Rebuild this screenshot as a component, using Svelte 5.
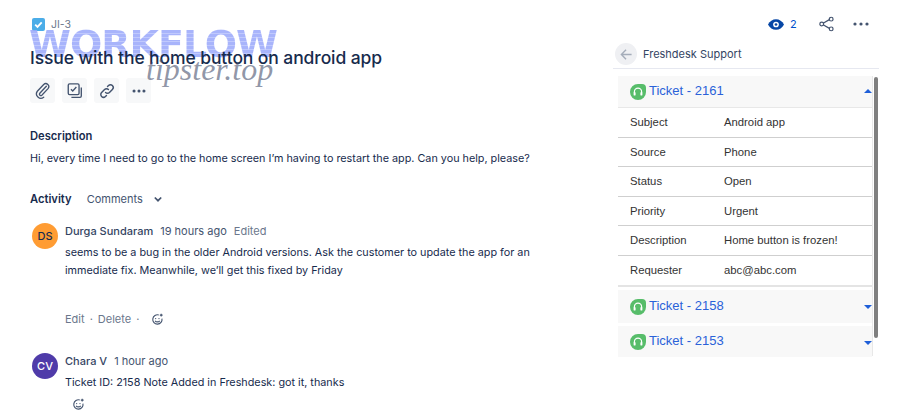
<script>
  const tickets = [
    { id: 2161, open: true },
    { id: 2158, open: false },
    { id: 2153, open: false }
  ];
  const details = [
    ['Subject', 'Android app'],
    ['Source', 'Phone'],
    ['Status', 'Open'],
    ['Priority', 'Urgent'],
    ['Description', 'Home button is frozen!'],
    ['Requester', 'abc@abc.com']
  ];
</script>

{#snippet smile()}
  <svg class="smile" width="13" height="13" viewBox="0 0 14 14" fill="none" stroke="#44546f" stroke-width="1.2">
    <path d="M11.8 6a5 5 0 1 1-3.4-3.8" />
    <circle cx="5" cy="6" r=".7" fill="#44546f" stroke="none" />
    <circle cx="8.6" cy="6" r=".7" fill="#44546f" stroke="none" />
    <path d="M4.4 8.4c1.2 1.6 3.8 1.6 5 0" />
    <path d="M11 .8v3M9.5 2.3h3" />
  </svg>
{/snippet}

{#snippet headset()}
  <svg class="headset" width="16" height="16" viewBox="0 0 16 16">
    <path d="M8 0h4a4 4 0 0 1 4 4v4a8 8 0 1 1-8-8z" fill="#57bd6a" />
    <path d="M4.4 9V7.8a3.6 3.6 0 0 1 7.2 0V9" fill="none" stroke="#fff" stroke-width="1.2" />
    <rect x="3.6" y="8" width="2" height="3.6" rx=".9" fill="#fff" />
    <rect x="10.4" y="8" width="2" height="3.6" rx=".9" fill="#fff" />
  </svg>
{/snippet}

<div class="page">
  <main class="issue">
    <div class="crumb">
      <svg width="13" height="13" viewBox="0 0 13 13">
        <rect width="13" height="13" rx="2" fill="#4bade8" />
        <path d="M3.2 6.6l2.3 2.3 4.2-4.6" fill="none" stroke="#fff" stroke-width="1.8" />
      </svg>
      <span>JI-3</span>
    </div>
    <div class="watermark">WORKFLOW</div>
    <h1>Issue with the home button on android app</h1>
    <div class="watermark2">tipster.top</div>

    <div class="tools">
      <button aria-label="Attach">
        <svg width="18" height="18" viewBox="0 0 20 20" fill="none" stroke="#44546f" stroke-width="1.5" stroke-linecap="round">
          <path d="M14.6 5.6l-7.4 8a1.6 1.6 0 0 0 2.3 2.2l7-7.5a3.4 3.4 0 0 0-4.9-4.7l-7.2 7.7a5 5 0 0 0 7.2 6.8" transform="translate(-.6 -.8) scale(.98)" />
        </svg>
      </button>
      <button aria-label="Subtask">
        <svg width="18" height="18" viewBox="0 0 20 20" fill="none" stroke="#44546f" stroke-width="1.5">
          <rect x="2.5" y="2" width="12" height="12" rx="1.5" />
          <path d="M5.5 8l2 2 4-4.4" />
          <path d="M17 6v9.5a1.5 1.5 0 0 1-1.5 1.5H6" />
        </svg>
      </button>
      <button aria-label="Link">
        <svg width="18" height="18" viewBox="0 0 20 20" fill="none" stroke="#44546f" stroke-width="1.6" stroke-linecap="round">
          <path d="M8.4 11.6a3 3 0 0 0 4.3 0l3.3-3.4a3 3 0 0 0-4.3-4.3l-1.1 1.1" />
          <path d="M11.6 8.4a3 3 0 0 0-4.3 0L4 11.8a3 3 0 0 0 4.3 4.3l1.1-1.1" />
        </svg>
      </button>
      <button aria-label="More">
        <svg width="18" height="18" viewBox="0 0 20 20" fill="#44546f">
          <circle cx="4.5" cy="10" r="1.7" /><circle cx="10" cy="10" r="1.7" /><circle cx="15.5" cy="10" r="1.7" />
        </svg>
      </button>
    </div>

    <h2 class="desc-title">Description</h2>
    <p class="desc">Hi, every time I need to go to the home screen I’m having to restart the app. Can you help, please?</p>

    <div class="activity">
      <h2>Activity</h2>
      <span class="filter">Comments</span>
      <svg width="10" height="10" viewBox="0 0 10 10" fill="none" stroke="#44546f" stroke-width="1.7"><path d="M1.8 3.5L5 6.7l3.2-3.2" /></svg>
    </div>

    <div class="comment first">
      <div class="avatar ds">DS</div>
      <div class="body">
        <div class="meta"><b>Durga Sundaram</b><span>19 hours ago</span><em>Edited</em></div>
        <p>seems to be a bug in the older Android versions. Ask the customer to update the app for an immediate fix. Meanwhile, we’ll get this fixed by Friday</p>
        <div class="actions"><span>Edit</span><i>·</i><span>Delete</span><i>·</i>{@render smile()}</div>
      </div>
    </div>

    <div class="comment">
      <div class="avatar cv">CV</div>
      <div class="body">
        <div class="meta"><b>Chara V</b><span>1 hour ago</span></div>
        <p>Ticket ID: 2158 Note Added in Freshdesk: got it, thanks</p>
        <div class="react">{@render smile()}</div>
      </div>
    </div>
  </main>

  <aside class="side">
    <div class="top-actions">
      <svg width="16" height="11" viewBox="0 0 18 12">
        <path d="M0 6c2-3.8 5.2-6 9-6s7 2.2 9 6c-2 3.8-5.2 6-9 6S2 9.800 0 6z" fill="#0747a6" />
        <circle cx="9" cy="6" r="3.2" fill="#fff" /><circle cx="9" cy="6" r="1.5" fill="#0747a6" />
      </svg>
      <span class="count">2</span>
      <svg class="share" width="15" height="16" viewBox="0 0 16 16" fill="#fff" stroke="#44546f" stroke-width="1.3">
        <path d="M3 8l9-5.2M3 8l9 5.2" />
        <circle cx="2.9" cy="8" r="2" /><circle cx="13" cy="2.8" r="2" /><circle cx="13" cy="13.2" r="2" />
      </svg>
      <svg class="more" width="16" height="6" viewBox="0 0 16 6" fill="#44546f">
        <circle cx="2" cy="3" r="1.6" /><circle cx="8" cy="3" r="1.6" /><circle cx="14" cy="3" r="1.6" />
      </svg>
    </div>

    <div class="panel-head">
      <span class="back">
        <svg width="13" height="13" viewBox="0 0 14 14" fill="none" stroke="#a5adba" stroke-width="1.5"><path d="M12.5 7h-11M6.5 2L1.5 7l5 5" /></svg>
      </span>
      <span>Freshdesk Support</span>
    </div>

    <div class="list">
      <div class="scrollbar"></div>
      {#each tickets as t}
        <div class="ticket" class:open={t.open}>
          {@render headset()}
          <span class="t-name">Ticket - {t.id}</span>
          <span class="caret" class:up={t.open}></span>
        </div>
        {#if t.open}
          <div class="rows">
            {#each details as [k, v]}
              <div class="row"><span>{k}</span><span>{v}</span></div>
            {/each}
          </div>
        {/if}
      {/each}
    </div>
  </aside>
</div>

<style>
  :global(body) {
    margin: 0;
    background: #fff;
  }

  .page {
    width: 900px;
    height: 420px;
    overflow: hidden;
    display: flex;
    font-family: Inter, "Liberation Sans", sans-serif;
    color: #172b4d;
    font-size: 11px;
  }

  .issue {
    position: relative;
    width: 583px;
    padding: 18px 0 0 30px;
    box-sizing: border-box;
  }

  .crumb {
    display: flex;
    align-items: center;
    gap: 6px;
    height: 13px;
    margin-left: 2px;
    font-size: 10.5px;
    color: #6b778c;
  }

  h1 {
    position: relative;
    margin: 15px 0 0;
    font-size: 17.5px;
    line-height: 24px;
    font-weight: 500;
    letter-spacing: -0.1px;
    color: #172b4d;
  }

  .watermark {
    position: absolute;
    left: 29px;
    top: 26px;
    font-family: "DejaVu Sans", sans-serif;
    font-weight: 700;
    font-size: 38px;
    line-height: 36px;
    letter-spacing: -1px;
    color: transparent;
    background: repeating-linear-gradient(#9aa8fb 0 3px, #b6c0fd 3px 4px);
    -webkit-background-clip: text;
    background-clip: text;
    opacity: 0.85;
  }

  .watermark2 {
    position: absolute;
    left: 146px;
    top: 51px;
    font-family: "Liberation Serif", serif;
    font-style: italic;
    font-size: 32px;
    line-height: 36px;
    color: rgba(70, 80, 110, 0.6);
  }

  .tools {
    display: flex;
    gap: 7px;
    margin-top: 8px;
  }

  .tools button {
    width: 25px;
    height: 25px;
    padding: 0;
    border: 0;
    border-radius: 3px;
    background: #f7f8f9;
    display: flex;
    align-items: center;
    justify-content: center;
  }

  h2 {
    margin: 0;
    font-size: 11.2px;
    font-weight: 600;
    line-height: 16px;
  }

  .desc-title {
    margin-top: 25px;
  }

  .desc {
    margin: 7px 0 0;
    line-height: 16px;
    font-size: 10.8px;
    white-space: nowrap;
  }

  .activity {
    display: flex;
    align-items: center;
    margin-top: 24px;
    height: 16px;
  }

  .filter {
    margin: 0 10px 0 15px;
    color: #44546f;
    font-size: 11px;
  }

  .comment {
    display: flex;
    gap: 7px;
    margin-top: 15px;
  }

  .comment.first {
    margin-top: 16px;
    height: 115px;
  }

  .avatar {
    flex: none;
    width: 26px;
    height: 26px;
    border-radius: 50%;
    margin-left: 2px;
    display: flex;
    align-items: center;
    justify-content: center;
    font-size: 11px;
    font-weight: 500;
  }

  .ds {
    background: #ff9c33;
    color: #172b4d;
  }

  .cv {
    background: #4f3ba9;
    color: #fff;
  }

  .body {
    flex: 1;
  }

  .meta {
    display: flex;
    gap: 7px;
    line-height: 16px;
    color: #44546f;
  }

  .meta b {
    font-weight: 500;
    color: #344563;
  }

  .meta em {
    font-style: normal;
    color: #6b778c;
  }

  .body p {
    margin: 5px 0 0;
    line-height: 18px;
    font-size: 10.8px;
    width: 470px;
  }

  .actions {
    display: flex;
    align-items: center;
    gap: 5px;
    margin-top: 31px;
    line-height: 16px;
    color: #6b778c;
  }

  .actions i {
    font-style: normal;
  }

  .actions .smile {
    margin-left: 7px;
  }

  .react {
    margin: 6px 0 0 7px;
    height: 14px;
  }

  .side {
    width: 317px;
    padding-left: 30px;
    box-sizing: border-box;
  }

  .top-actions {
    display: flex;
    align-items: center;
    height: 16px;
    margin: 16px 0 0 155px;
  }

  .count {
    margin-left: 6px;
    color: #0052cc;
  }

  .share {
    margin-left: 22px;
  }

  .more {
    margin-left: 19px;
  }

  .panel-head {
    display: flex;
    align-items: center;
    gap: 6px;
    height: 28px;
    margin-top: 8px;
    padding-left: 2px;
    width: 264px;
    border-bottom: 1px solid #e6e8f0;
    color: #344563;
    font-size: 11px;
  }

  .back {
    width: 22px;
    height: 22px;
    border-radius: 50%;
    background: #eff0f3;
    display: flex;
    align-items: center;
    justify-content: center;
  }

  .list {
    position: relative;
    width: 254px;
    height: 280px;
    margin: 7px 0 0 5px;
    border-right: 1px solid #e8e8e8;
  }

  .scrollbar {
    position: absolute;
    right: -6px;
    top: 1px;
    width: 4px;
    height: 261px;
    border-radius: 2px;
    background: #7f7f7f;
  }

  .ticket {
    display: flex;
    align-items: center;
    height: 33px;
    padding: 0 0 0 12px;
    background: #f8f8f8;
    margin-bottom: 3px;
    position: relative;
  }

  .ticket:last-child {
    height: 31px;
    margin-bottom: 0;
  }

  .ticket.open {
    height: 31px;
    margin-bottom: 0;
    border-bottom: 1px solid #e8e8e8;
  }

  .headset {
    margin-right: 3px;
  }

  .t-name {
    color: #2a62d9;
    font-family: "Liberation Sans", sans-serif;
    font-size: 13px;
    position: relative;
    top: -1.5px;
  }

  .caret {
    position: absolute;
    right: 0;
    top: 15px;
    border: 4px solid transparent;
    border-top: 4px solid #1f5fd8;
    border-bottom: 0;
  }

  .caret.up {
    top: 13px;
    border-top: 0;
    border-bottom: 4px solid #1f5fd8;
  }

  .rows {
    border-bottom: 2px solid #e4e4e4;
    margin-bottom: 3px;
  }

  .row {
    display: flex;
    align-items: center;
    height: 29.5px;
    box-sizing: border-box;
    padding-left: 12px;
    border-bottom: 1px solid #cfcfcf;
    color: #333;
    font-family: "Liberation Sans", sans-serif;
    font-size: 11.3px;
  }

  .row:last-child {
    border-bottom: 0;
  }

  .row span:first-child {
    width: 94px;
  }
</style>
